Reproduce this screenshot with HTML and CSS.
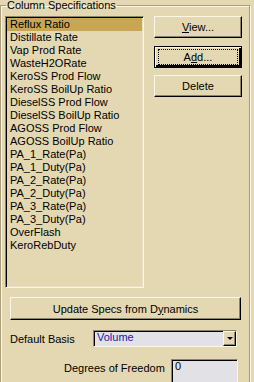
FILE: index.html
```html
<!DOCTYPE html>
<html>
<head>
<meta charset="utf-8">
<link rel="stylesheet" href="styles.css">
</head>
<body>
<fieldset class="group">
  <legend class="legend">Column Specifications</legend>
  <div class="top">
    <ul class="listbox">
      <li class="item sel">Reflux Ratio</li>
      <li class="item">Distillate Rate</li>
      <li class="item">Vap Prod Rate</li>
      <li class="item">WasteH2ORate</li>
      <li class="item">KeroSS Prod Flow</li>
      <li class="item">KeroSS BoilUp Ratio</li>
      <li class="item">DieselSS Prod Flow</li>
      <li class="item">DieselSS BoilUp Ratio</li>
      <li class="item">AGOSS Prod Flow</li>
      <li class="item">AGOSS BoilUp Ratio</li>
      <li class="item">PA_1_Rate(Pa)</li>
      <li class="item">PA_1_Duty(Pa)</li>
      <li class="item">PA_2_Rate(Pa)</li>
      <li class="item">PA_2_Duty(Pa)</li>
      <li class="item">PA_3_Rate(Pa)</li>
      <li class="item">PA_3_Duty(Pa)</li>
      <li class="item">OverFlash</li>
      <li class="item">KeroRebDuty</li>
    </ul>
    <div class="buttons">
      <div class="btn"><span><u>V</u>iew...</span></div>
      <div class="btn default"><span class="focus">A<u>d</u>d...</span></div>
      <div class="btn">Delete</div>
    </div>
  </div>
  <div class="btn wide">Update Specs from D<u>y</u>namics</div>
  <div class="row basis">
    <span class="label">Default Basis</span>
    <div class="combo">
      <span class="combo-text">Volume</span>
      <span class="drop"><span class="arrow"></span></span>
    </div>
  </div>
  <div class="row dof">
    <span class="label">Degrees of Freedom</span>
    <div class="field">0</div>
  </div>
</fieldset>
</body>
</html>
```
FILE: styles.css
```css
html, body {
  margin: 0;
  padding: 0;
}
body {
  width: 254px;
  height: 382px;
  overflow: hidden;
  background: #e4d8b2;
  font-family: "Liberation Sans", Arial, sans-serif;
  font-size: 11px;
  color: #000;
}
.group {
  margin: -1px 0 0 0;
  padding: 4px 0 0 4px;
  width: 250px;
  height: 420px;
  border: 1px solid #a99d7b;
  box-shadow: inset 1px 1px 0 #fbf6e6, 1px 1px 0 #fbf6e6;
  box-sizing: border-box;
}
.legend {
  padding: 0 1px;
  margin-left: 1px;
  line-height: 13px;
}
.top {
  display: flex;
  align-items: flex-start;
}
.listbox {
  list-style: none;
  margin: 0;
  padding: 0;
  width: 139px;
  height: 272px;
  box-sizing: border-box;
  border-style: solid;
  border-width: 1px;
  border-color: #8d8367 #fbf6e6 #fbf6e6 #8d8367;
  box-shadow: inset 1px 1px 0 #000, inset -1px -1px 0 #e8dfc4;
  padding: 1px 0 0 1px;
  background: #e4d8b2;
}
.item {
  height: 13px;
  line-height: 13px;
  padding-left: 3px;
  white-space: nowrap;
  margin-right: 1px;
}
.sel {
  background: #c9a654;
}
.buttons {
  margin-left: 10px;
  display: flex;
  flex-direction: column;
  gap: 8px;
}
.btn {
  width: 88px;
  height: 22px;
  box-sizing: border-box;
  display: flex;
  align-items: center;
  justify-content: center;
  border-style: solid;
  border-width: 1px;
  border-color: #fbf6e6 #000 #000 #fbf6e6;
  box-shadow: inset -1px -1px 0 #8d8367;
  background: #e4d8b2;
}
.btn.default {
  border: 1px solid #000;
  box-shadow: inset 1px 1px 0 #fbf6e6, inset -2px -2px 0 #000, inset -1px -1px 0 #000;
}
.buttons .btn:nth-child(3) {
  margin-top: -1px;
}
.focus {
  display: flex;
  align-items: center;
  justify-content: center;
  width: 78px;
  height: 14px;
  outline: 1px dotted #000;
}
.wide {
  width: 231px;
  height: 23px;
  margin: 9px 0 0 5px;
}
.row {
  display: flex;
  align-items: center;
}
.basis {
  margin-top: 10px;
  padding-left: 5px;
}
.basis .label {
  width: 83px;
}
.combo {
  width: 144px;
  height: 17px;
  box-sizing: border-box;
  border-style: solid;
  border-width: 1px;
  border-color: #8d8367 #fbf6e6 #fbf6e6 #8d8367;
  box-shadow: inset 1px 1px 0 #000;
  background: #e2e1e6;
  display: flex;
  align-items: center;
  justify-content: space-between;
}
.combo-text {
  color: #1a1aa8;
  padding-left: 3px;
  line-height: 13px;
  margin-top: -2px;
}
.drop {
  width: 13px;
  height: 15px;
  box-sizing: border-box;
  border-style: solid;
  border-width: 1px;
  border-color: #fbf6e6 #000 #000 #fbf6e6;
  box-shadow: inset -1px -1px 0 #8d8367;
  background: #e4d8b2;
  display: flex;
  align-items: center;
  justify-content: center;
}
.arrow {
  width: 0;
  height: 0;
  border-left: 3px solid transparent;
  border-right: 3px solid transparent;
  border-top: 3px solid #000;
}
.dof {
  margin-top: 12px;
  padding-left: 59px;
  align-items: flex-start;
}
.dof .label {
  width: 107px;
  margin-top: 3px;
  line-height: 13px;
}
.field {
  width: 67px;
  height: 24px;
  box-sizing: border-box;
  border-style: solid;
  border-width: 1px;
  border-color: #8d8367 #fbf6e6 #fbf6e6 #8d8367;
  box-shadow: inset 1px 1px 0 #000;
  background: #e2e1e6;
  padding: 0 0 0 3px;
  line-height: 13px;
}
```
